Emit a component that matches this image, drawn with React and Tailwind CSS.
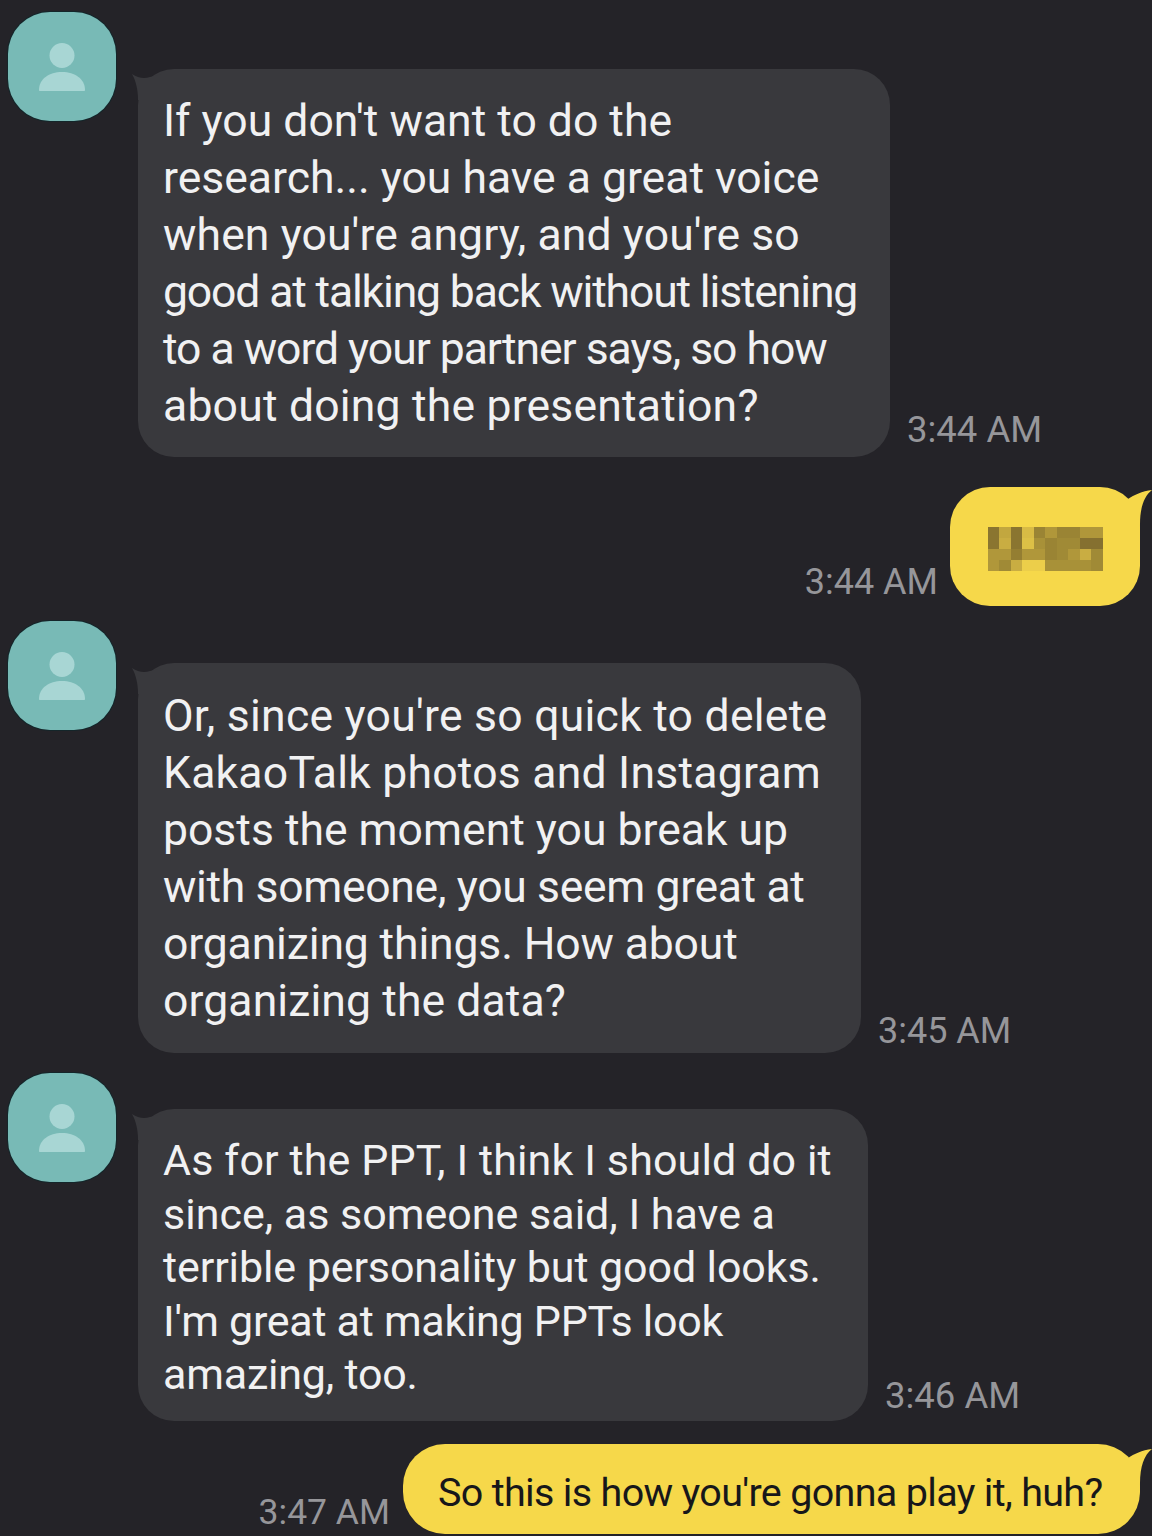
const font = { fontFamily: 'Roboto, sans-serif' };

const pixels = [
  ['#8a7530', '#c2a73f', '#8a7530', '#d8bb45', '#9a8434', '#b0973a', '#9a8434', '#9a8434', '#b0973a', '#b0973a'],
  ['#8a7530', '#c9ad42', '#8a7530', '#dcc046', '#a89138', '#9a8434', '#a08a36', '#a08a36', '#857030', '#857030'],
  ['#b0973a', '#b0973a', '#947e32', '#b0973a', '#b0973a', '#9a8434', '#a08a36', '#b0973a', '#c9ad42', '#a08a36'],
  ['#b0973a', '#a08a36', '#c9ad42', '#ecce4a', '#ecce4a', '#a89138', '#a89138', '#a89138', '#a89138', '#a08a36'],
];

function Avatar() {
  return (
    <div className="w-[108px] h-[109px] shrink-0 rounded-[42px] bg-[#78bab6] ring-1 ring-[#14262a] flex items-center justify-center">
      <svg width="48" height="48" viewBox="0 0 48 48" fill="#a8d6d4">
        <ellipse cx="24" cy="12.500" rx="12.500" ry="12.500" />
        <path d="M1 47c0-11 10-18 23-18s23 7 23 18c0 .6-.4 1-1 1H2c-.6 0-1-.4-1-1z" />
      </svg>
    </div>
  );
}

function Incoming({ lines, time, top, mt, width, height, size, leading, pt, timeGap, timeSize }) {
  return (
    <div className={`flex pl-2 ${mt}`}>
      <Avatar />
      <div className={`flex items-end ml-[22px] ${top}`}>
        <div className={`relative ${width} ${height} ${pt} pl-[25px] rounded-[36px] bg-[#39393d] text-[#f1f1f2] ${size} ${leading} whitespace-nowrap`}>
          <svg className="absolute left-[-6px] top-[5px]" width="30" height="26" viewBox="0 0 30 26" fill="#39393d">
            <path d="M0 0c6 4 12 5 18 3l12-3v26H6C6 16 4 7 0 0z" />
          </svg>
          <div className="relative">
            {lines.map((l) => (
              <div key={l.text} className={l.track}>{l.text}</div>
            ))}
          </div>
        </div>
        <span className={`${timeGap} ${timeSize} leading-[42px] text-[#96969a]`}>{time}</span>
      </div>
    </div>
  );
}

function Tail({ pos }) {
  return (
    <svg className={`absolute right-[-12px] ${pos}`} width="36" height="60" viewBox="0 0 36 60" fill="#f6d84a">
      <path d="M0 8c4 2 8 3 12 2 6-4 14-8 24-9-8 6-12 18-12 34 0 8-1 16-4 24H0z" />
    </svg>
  );
}

export default function App() {
  return (
    <div className="w-[1152px] h-[1536px] overflow-hidden bg-[#242328] flex flex-col pt-3" style={font}>
      <Incoming
        mt="mt-0"
        top="mt-[57px]"
        width="w-[752px]"
        height="h-[388px]"
        pt="pt-[24px]"
        size="text-[44.500px]"
        leading="leading-[57px]"
        timeGap="ml-[17px] mb-[6px]"
        timeSize="text-[36.500px]"
        time="3:44 AM"
        lines={[
          { text: "If you don't want to do the", track: 'tracking-[0px]' },
          { text: 'research... you have a great voice', track: 'tracking-[0px]' },
          { text: "when you're angry, and you're so", track: 'tracking-[0.100px]' },
          { text: 'good at talking back without listening', track: 'tracking-[-1.150px]' },
          { text: 'to a word your partner says, so how', track: 'tracking-[-1.030px]' },
          { text: 'about doing the presentation?', track: 'tracking-[0.200px]' },
        ]}
      />

      <div className="flex justify-end items-end mt-[30px] pr-3">
        <span className="mr-[12px] mb-[3px] text-[36px] leading-[42px] text-[#96969a]">3:44 AM</span>
        <div className="relative w-[190px] h-[119px] rounded-[40px] bg-[#f6d84a] flex items-center justify-center">
          <Tail pos="top-[2px]" />
          <div className="grid grid-cols-[repeat(10,11.5px)] grid-rows-[repeat(4,11px)] blur-[0.6px] mt-[4px]">
            {pixels.flat().map((c, i) => (
              <div key={i} style={{ backgroundColor: c }} />
            ))}
          </div>
        </div>
      </div>

      <Incoming
        mt="mt-[15px]"
        top="mt-[42px]"
        width="w-[723px]"
        height="h-[390px]"
        pt="pt-[25px]"
        size="text-[44.500px]"
        leading="leading-[57px]"
        timeGap="ml-[17px] mb-[1px]"
        timeSize="text-[36px]"
        time="3:45 AM"
        lines={[
          { text: "Or, since you're so quick to delete", track: 'tracking-[0.250px]' },
          { text: 'KakaoTalk photos and Instagram', track: 'tracking-[0.230px]' },
          { text: 'posts the moment you break up', track: 'tracking-[0px]' },
          { text: 'with someone, you seem great at', track: 'tracking-[-0.350px]' },
          { text: 'organizing things. How about', track: 'tracking-[-0.140px]' },
          { text: 'organizing the data?', track: 'tracking-[0.100px]' },
        ]}
      />

      <Incoming
        mt="mt-[20px]"
        top="mt-[36px]"
        width="w-[730px]"
        height="h-[312px]"
        pt="pt-[25px]"
        size="text-[43px]"
        leading="leading-[53.500px]"
        timeGap="ml-[17px] mb-[4px]"
        timeSize="text-[36.500px]"
        time="3:46 AM"
        lines={[
          { text: 'As for the PPT, I think I should do it', track: 'tracking-[0.130px]' },
          { text: 'since, as someone said, I have a', track: 'tracking-[0px]' },
          { text: 'terrible personality but good looks.', track: 'tracking-[-0.100px]' },
          { text: "I'm great at making PPTs look", track: 'tracking-[-0.280px]' },
          { text: 'amazing, too.', track: 'tracking-[-0.200px]' },
        ]}
      />

      <div className="flex justify-end items-end mt-[23px] pr-[12px]">
        <span className="mr-[13px] mb-[1px] text-[35.500px] leading-[42px] text-[#96969a]">3:47 AM</span>
        <div className="relative w-[737px] h-[90px] rounded-[42px] bg-[#f6d84a] pl-[35px] pt-[26px] text-[39.500px] leading-[46px] tracking-[-0.680px] text-[#17171a] whitespace-nowrap">
          <Tail pos="top-[4px]" />
          <div className="relative">So this is how you're gonna play it, huh?</div>
        </div>
      </div>
    </div>
  );
}
